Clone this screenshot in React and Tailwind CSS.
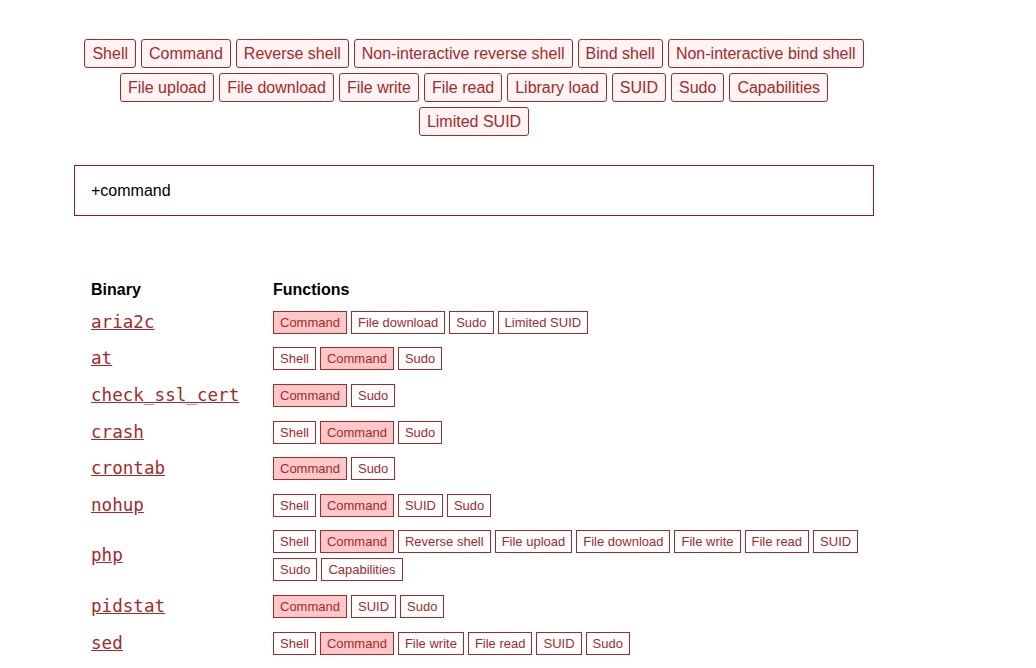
import React from "react";

const filters = [
  "Shell",
  "Command",
  "Reverse shell",
  "Non-interactive reverse shell",
  "Bind shell",
  "Non-interactive bind shell",
  "File upload",
  "File download",
  "File write",
  "File read",
  "Library load",
  "SUID",
  "Sudo",
  "Capabilities",
  "Limited SUID",
];

const rows = [
  { name: "aria2c", fns: ["Command", "File download", "Sudo", "Limited SUID"] },
  { name: "at", fns: ["Shell", "Command", "Sudo"] },
  { name: "check_ssl_cert", fns: ["Command", "Sudo"] },
  { name: "crash", fns: ["Shell", "Command", "Sudo"] },
  { name: "crontab", fns: ["Command", "Sudo"] },
  { name: "nohup", fns: ["Shell", "Command", "SUID", "Sudo"] },
  {
    name: "php",
    fns: [
      "Shell",
      "Command",
      "Reverse shell",
      "File upload",
      "File download",
      "File write",
      "File read",
      "SUID",
      "Sudo",
      "Capabilities",
    ],
  },
  { name: "pidstat", fns: ["Command", "SUID", "Sudo"] },
  { name: "sed", fns: ["Shell", "Command", "File write", "File read", "SUID", "Sudo"] },
];

const Tag = ({ label, active }) => (
  <span
    className={`inline-block border border-[#a52a2a] px-[6px] py-[2px] text-[13px] leading-[17px] text-[#a52a2a] ${
      active ? "bg-[#ffc8c8]" : "bg-white"
    }`}
  >
    {label}
  </span>
);

export default function App() {
  return (
    <div className="min-h-screen bg-white font-['Liberation_Sans',Arial,sans-serif] text-black">
      <div className="ml-[74px] w-[800px] pt-[39px]">
        <div className="flex flex-wrap justify-center gap-[5px]">
          {filters.map((f) => (
            <button
              key={f}
              className="rounded-[3px] border border-[#a52a2a] bg-[#fff3f3] px-[7px] py-[5px] text-[16px] leading-[17px] text-[#a52a2a]"
            >
              {f}
            </button>
          ))}
        </div>

        <div className="mt-[29px] flex h-[51px] items-center border border-[#8b1c2c] px-[16px] text-[16px]">
          +command
        </div>

        <div className="mt-[59px] pl-[17px]">
          <div className="grid grid-cols-[182px_1fr] items-center">
            <div className="pt-[6px] pb-[5px] text-[16px] font-bold leading-[18px]">Binary</div>
            <div className="pt-[6px] pb-[5px] text-[16px] font-bold leading-[18px]">Functions</div>
            {rows.map((r) => (
              <React.Fragment key={r.name}>
                <div className="py-[6.8px] leading-[23px]">
                  <a
                    href="#"
                    className="font-['DejaVu_Sans_Mono',monospace] text-[17.6px] leading-[23px] text-[#a52a2a] underline"
                  >
                    {r.name}
                  </a>
                </div>
                <div className="flex flex-wrap gap-x-[4px] gap-y-[5px] py-[6.8px]">
                  {r.fns.map((f) => (
                    <Tag key={f} label={f} active={f === "Command"} />
                  ))}
                </div>
              </React.Fragment>
            ))}
          </div>
        </div>
      </div>
    </div>
  );
}
